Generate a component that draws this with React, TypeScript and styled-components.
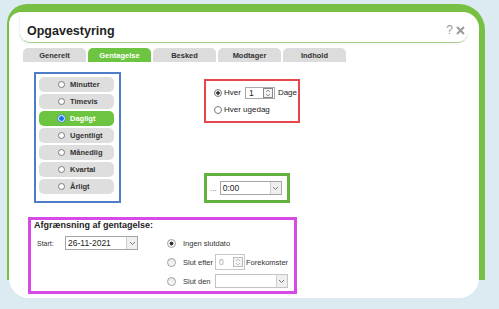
import styled, { createGlobalStyle } from 'styled-components'

const GlobalStyle = createGlobalStyle`
  html, body {
    margin: 0;
    padding: 0;
    background: #dceaf2;
  }
  body {
    font-family: 'Liberation Sans', Arial, sans-serif;
    color: #222;
  }
  * {
    box-sizing: border-box;
  }
`

const tabs = ['Generelt', 'Gentagelse', 'Besked', 'Modtager', 'Indhold']
const frequencies = ['Minutter', 'Timevis', 'Dagligt', 'Ugentligt', 'Månedlig', 'Kvartal', 'Årligt']

function Chevron() {
  return (
    <svg width="7" height="5" viewBox="0 0 7 5">
      <path d="M1 1 L3.5 3.5 L6 1" fill="none" stroke="#777" strokeWidth="1" />
    </svg>
  )
}

function SpinIcon({ faded }: { faded?: boolean }) {
  const c = faded ? '#bbb' : '#888'
  return (
    <svg width="10" height="10" viewBox="0 0 10 10">
      <rect x="0.5" y="0.5" width="9" height="9" fill="#f4f4f4" stroke={c} />
      <path d="M3 4 L5 2 L7 4" fill="none" stroke={c} strokeWidth="0.9" />
      <path d="M3 6 L5 8 L7 6" fill="none" stroke={c} strokeWidth="0.9" />
    </svg>
  )
}

export default function App() {
  return (
    <>
      <GlobalStyle />
      <Page>
        <Frame>
          <Card>
            <Header>
              <Title>Opgavestyring</Title>
              <HeaderIcons>
                <span>?</span>
                <svg width="9" height="9" viewBox="0 0 9 9">
                  <path d="M1 1 L8 8 M8 1 L1 8" stroke="#9a9a9a" strokeWidth="2" />
                </svg>
              </HeaderIcons>
            </Header>

            <TabRow>
              {tabs.map((t) => (
                <Tab key={t} $active={t === 'Gentagelse'}>
                  {t}
                </Tab>
              ))}
            </TabRow>

            <Body>
              <FreqBox>
                {frequencies.map((f) => (
                  <FreqItem key={f} $active={f === 'Dagligt'}>
                    <Radio $size={7} $tone="blue" $checked={f === 'Dagligt'} />
                    {f}
                  </FreqItem>
                ))}
              </FreqBox>

              <RightCol>
                <DayBox>
                  <OptionRow>
                    <Radio $size={8} $tone="grey" $checked />
                    <span>Hver</span>
                    <NumberInput $width={30} $height={12}>
                      <span>1</span>
                      <SpinIcon />
                    </NumberInput>
                    <span>Dage</span>
                  </OptionRow>
                  <OptionRow>
                    <Radio $size={8} $tone="grey" />
                    <span>Hver ugedag</span>
                  </OptionRow>
                </DayBox>

                <TimeBox>
                  <Dots>...</Dots>
                  <Select $width={62} $height={14}>
                    <SelectValue>0:00</SelectValue>
                    <SelectArrow>
                      <Chevron />
                    </SelectArrow>
                  </Select>
                </TimeBox>
              </RightCol>

              <RangeBox>
                <RangeTitle>Afgrænsning af gentagelse:</RangeTitle>
                <RangeGrid>
                  <StartRow>
                    <StartLabel>Start:</StartLabel>
                    <Select $width={73} $height={14}>
                      <SelectValue>26-11-2021</SelectValue>
                      <SelectArrow>
                        <Chevron />
                      </SelectArrow>
                    </Select>
                  </StartRow>
                  <EndList>
                    <EndRow>
                      <Radio $size={9} $tone="win" $checked />
                      <span>Ingen slutdato</span>
                    </EndRow>
                    <EndRow>
                      <Radio $size={9} $tone="win" />
                      <span>Slut efter</span>
                      <NumberInput $width={30} $height={16} $faded>
                        <span>0</span>
                        <SpinIcon faded />
                      </NumberInput>
                      <span>Forekomster</span>
                    </EndRow>
                    <EndRow>
                      <Radio $size={9} $tone="win" />
                      <span>Slut den</span>
                      <EndSelect $width={73} $height={14} $faded>
                        <SelectValue />
                        <SelectArrow>
                          <Chevron />
                        </SelectArrow>
                      </EndSelect>
                    </EndRow>
                  </EndList>
                </RangeGrid>
              </RangeBox>
            </Body>
          </Card>
        </Frame>
      </Page>
    </>
  )
}

const Page = styled.div`
  width: 499px;
  height: 309px;
  overflow: hidden;
  padding: 4px 0 0 7px;
`

const Frame = styled.div`
  width: 478px;
  height: 276px;
  padding: 8px 6px 0 2px;
  background: #78c043;
  border-radius: 20px 26px 0 0;
`

const Card = styled.div`
  height: 286px;
  display: flex;
  flex-direction: column;
  background: #fff;
  border-radius: 12px 16px 20px 20px;
`

const Header = styled.div`
  height: 31px;
  margin: 0 11px;
  padding: 0 3px 3px 7px;
  display: flex;
  align-items: flex-end;
  justify-content: space-between;
  border-bottom: 1px solid #a9cf8f;
  border-radius: 0 0 10px 10px;
  box-shadow: -1px 1px 2px rgba(0, 0, 0, 0.06);
`

const Title = styled.h1`
  margin: 0;
  font-size: 12.5px;
  line-height: 15px;
  font-weight: 700;
  color: #1e1e1e;
`

const HeaderIcons = styled.div`
  display: flex;
  align-items: center;
  gap: 3px;
  padding-bottom: 3px;
  font-size: 12px;
  line-height: 12px;
  color: #9a9a9a;
`

const TabRow = styled.div`
  display: flex;
  gap: 2px;
  margin: 5px 0 0 14px;
`

const Tab = styled.div<{ $active?: boolean }>`
  width: 63px;
  height: 14px;
  display: flex;
  align-items: center;
  justify-content: center;
  border-radius: 5px 5px 0 0;
  background: ${(p) => (p.$active ? '#6cc440' : '#dcdcdc')};
  color: ${(p) => (p.$active ? '#fff' : '#333')};
  font-size: 7.5px;
  font-weight: 700;
`

const Body = styled.div`
  display: grid;
  grid-template-columns: 176px 1fr;
  margin-top: 10px;
  padding-left: 19px;
`

const FreqBox = styled.div`
  width: 87px;
  margin-left: 6px;
  padding: 3px 5px 5px 3px;
  display: flex;
  flex-direction: column;
  gap: 2px;
  border: 2px solid #4f7cc9;
`

const FreqItem = styled.div<{ $active?: boolean }>`
  height: 15px;
  display: flex;
  align-items: center;
  gap: 5px;
  padding-left: 19px;
  border-radius: 5px;
  background: ${(p) => (p.$active ? '#6cc440' : '#dedede')};
  color: ${(p) => (p.$active ? '#fff' : '#333')};
  font-size: 7.5px;
  font-weight: 700;
`

const Radio = styled.span<{ $size: number; $checked?: boolean; $tone: 'blue' | 'grey' | 'win' }>`
  flex: none;
  width: ${(p) => p.$size}px;
  height: ${(p) => p.$size}px;
  border-radius: 50%;
  border: 1px solid
    ${(p) => (p.$checked && p.$tone === 'blue' ? '#fff' : p.$tone === 'win' ? '#a0a0a0' : '#7a7a7a')};
  box-shadow: ${(p) => (p.$checked && p.$tone === 'blue' ? '0 0 0 0.5px #3b7fe0' : 'none')};
  background: ${(p) =>
    p.$checked && p.$tone === 'blue'
      ? '#1a6fe6'
      : p.$checked
        ? 'radial-gradient(circle, #333 0 35%, #f4f4f4 45%)'
        : p.$tone === 'win'
          ? 'linear-gradient(#e8e8e8, #fafafa)'
          : '#fff'};
`

const RightCol = styled.div`
  display: flex;
  flex-direction: column;
  align-items: flex-start;
`

const DayBox = styled.div`
  width: 96px;
  height: 44px;
  margin-top: 7px;
  padding: 6px 0 0 8px;
  display: flex;
  flex-direction: column;
  gap: 6px;
  border: 2px solid #e4484c;
  font-size: 8px;
  color: #222;
  white-space: nowrap;
`

const OptionRow = styled.div`
  height: 11px;
  display: flex;
  align-items: center;
  gap: 2px;
`

const NumberInput = styled.div<{ $width: number; $height: number; $faded?: boolean }>`
  flex: none;
  width: ${(p) => p.$width}px;
  height: ${(p) => p.$height}px;
  margin: 0 1px 0 2px;
  padding: 0 1px 0 3px;
  display: flex;
  align-items: center;
  justify-content: space-between;
  border: 1px solid ${(p) => (p.$faded ? '#c8c8c8' : '#a9a9a9')};
  background: #fff;
  color: ${(p) => (p.$faded ? '#aaa' : '#222')};
  font-size: 8.5px;
`

const TimeBox = styled.div`
  width: 86px;
  height: 30px;
  margin-top: 50px;
  padding: 0 8px 0 3px;
  display: flex;
  align-items: center;
  gap: 3px;
  border: 3px solid #62b240;
`

const Dots = styled.span`
  font-size: 8px;
  color: #666;
`

const Select = styled.div<{ $width: number; $height: number; $faded?: boolean }>`
  flex: none;
  width: ${(p) => p.$width}px;
  height: ${(p) => p.$height}px;
  display: flex;
  border: 1px solid ${(p) => (p.$faded ? '#c4c4c4' : '#a5a5a5')};
  background: #fff;
`

const EndSelect = styled(Select)`
  margin-left: 4px;
`

const SelectValue = styled.span`
  flex: 1;
  display: flex;
  align-items: center;
  padding-left: 2px;
  font-size: 8.5px;
  color: #222;
`

const SelectArrow = styled.span`
  width: 11px;
  display: flex;
  align-items: center;
  justify-content: center;
  border-left: 1px solid #cfcfcf;
  background: #efefef;
`

const RangeBox = styled.div`
  grid-column: 1 / -1;
  width: 269px;
  height: 77px;
  margin-top: 14px;
  padding: 0 3px;
  border: 3px solid #d64be6;
`

const RangeTitle = styled.div`
  font-size: 9px;
  line-height: 11px;
  font-weight: 700;
  color: #1e1e1e;
`

const RangeGrid = styled.div`
  display: grid;
  grid-template-columns: 133px 1fr;
  margin-top: 5px;
`

const StartRow = styled.div`
  height: 14px;
  display: flex;
  align-items: center;
`

const StartLabel = styled.span`
  width: 31px;
  padding-left: 3px;
  font-size: 7px;
  color: #333;
`

const EndList = styled.div`
  display: flex;
  flex-direction: column;
  gap: 5px;
`

const EndRow = styled.div`
  height: 14px;
  display: flex;
  align-items: center;
  gap: 0;
  font-size: 7.5px;
  color: #333;
  white-space: nowrap;

  & > span:first-child {
    margin-right: 7px;
  }
`
